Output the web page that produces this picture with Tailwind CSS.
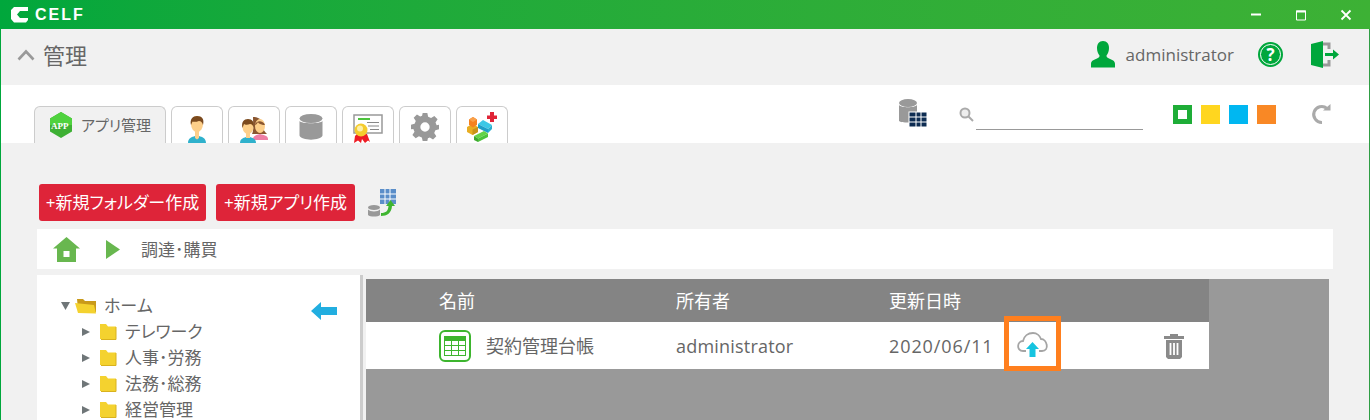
<!DOCTYPE html>
<html lang="ja">
<head>
  <meta charset="UTF-8" />
  <title>CELF</title>
  <script src="https://cdn.jsdelivr.net/npm/@tailwindcss/browser@4"></script>
</head>
<body class="h-[420px] w-[1370px] overflow-hidden bg-[#f1f1f1] font-['Open_Sans','Noto_Sans_CJK_JP',sans-serif] [font-feature-settings:'palt'] text-[#666]">
<div class="h-[420px] flex flex-col border-x border-x-[#00a73c] border-r-[#2f9e44]">

  <!-- Title bar -->
  <div class="h-[29px] shrink-0 -mx-px flex items-center bg-gradient-to-r from-[#00a73c] to-[#3db135] text-white">
    <svg class="ml-[11px]" width="17" height="16" viewBox="0 0 17 16"><path d="M3 0H17V4H9L6 7.500L9 11H17V13L15 15.500H3L0 12V3Z" fill="#fff"/></svg>
    <span class="ml-[7px] font-['Liberation_Sans'] text-[16px] leading-none tracking-[2px] font-bold">CELF</span>
    <div class="ml-auto flex items-center">
      <svg width="12" height="12" viewBox="0 0 12 12" class="mr-[33px]"><path d="M1 5.500H11" stroke="#fff" stroke-width="2"/></svg>
      <svg width="12" height="12" viewBox="0 0 12 12" class="mr-[33px]"><path d="M1.500 2H10.500V11H1.500Z" stroke="#fff" fill="none"/><path d="M1 2.500H11" stroke="#fff" stroke-width="2"/></svg>
      <svg width="12" height="12" viewBox="0 0 12 12" class="mr-[18px]"><path d="M1.500 1.500L10.500 10.500M10.500 1.500L1.500 10.500" stroke="#fff" stroke-width="1.800"/></svg>
    </div>
  </div>

  <!-- Header -->
  <div class="h-[56px] shrink-0 flex items-center pb-[5px]">
    <svg class="ml-[16px]" width="18" height="12" viewBox="0 0 18 12"><path d="M1.500 10.500L9 2.500L16.500 10.500" stroke="#999" stroke-width="2.600" fill="none"/></svg>
    <span class="ml-[8px] text-[22px] leading-none">管理</span>
    <div class="ml-auto flex items-center">
      <svg width="26" height="27" viewBox="0 0 26 27" class="mb-[1px]"><path d="M13 0C17 0 19 3 19 7C19 10 18 12.500 16.500 14.500C16.500 16 17 16.500 19 17.500C22 19 25 19.500 25 23V26.500H1V23C1 19.500 4 19 7 17.500C9 16.500 9.500 16 9.500 14.500C8 12.500 7 10 7 7C7 3 9 0 13 0Z" fill="#00a73c"/></svg>
      <span class="ml-[10px] text-[17px] leading-none">administrator</span>
      <div class="ml-[24px] w-[25px] h-[25px] rounded-full bg-[#00a73c] border-2 border-[#00a73c] outline outline-1 -outline-offset-3 outline-white flex items-center justify-center text-white text-[17px] font-bold leading-none">?</div>
      <svg class="ml-[27px] mr-[29px]" width="30" height="28" viewBox="0 0 30 28"><path d="M1 3L13 0V27L1 24Z" fill="#00a73c"/><path d="M13 3H19V8M19 19V24H13" stroke="#999" stroke-width="3" fill="none"/><path d="M15 12H23V8.500L29 13.500L23 18.500V15H15Z" fill="#00a73c"/></svg>
    </div>
  </div>

  <!-- Tabs -->
  <div class="h-[58px] shrink-0 bg-white flex items-end relative">
    <div class="ml-[33px] flex gap-[5px] items-end">
      <div class="w-[132px] h-[37px] border border-b-0 border-[#ccc] rounded-t-[6px] bg-[#f1f1f1] flex items-center pl-[14px] relative">
        <svg width="24" height="26" viewBox="0 0 24 26"><path d="M12 0L23 6.500V19.500L12 26L1 19.500V6.500Z" fill="#3eb034"/><path d="M12 0L23 6.500V13H1V6.500Z" fill="#4fd23e"/></svg>
        <span class="absolute left-[16px] top-[15px] text-[9px] font-bold text-white leading-none font-['Liberation_Serif']">APP</span>
        <span class="ml-[8px] text-[15px] leading-none">アプリ管理</span>
      </div>
      <div class="w-[52px] h-[37px] border border-b-0 border-[#ccc] rounded-t-[6px] flex items-end justify-center">
        <svg width="18" height="27" viewBox="0 0 18 27"><path d="M0 27C0 22 4 21 7 20H11C14 21 18 22 18 27Z" fill="#2fb1cc"/><path d="M7 14H11V22L9 23.500L7 22Z" fill="#fdcf8a"/><ellipse cx="9" cy="8" rx="6" ry="8" fill="#fdcf8a"/><path d="M3 9C1.500 3 5 0 9 0C14 0 16.500 3 15 9C14 6 13 5 11 5C9 6 5 6 4.500 5.500Z" fill="#7b4a1e"/></svg>
      </div>
      <div class="w-[52px] h-[37px] border border-b-0 border-[#ccc] rounded-t-[6px] flex items-end justify-center">
        <svg width="28" height="26" viewBox="0 0 28 26"><path d="M13 0C20 0 23 4 23 9C23 13 25 15 27 17H12C14 14 13 5 13 0Z" fill="#8a5630"/><path d="M13 22C13 19 16 18 20 17C24 18 28 19 28 22V23H13Z" fill="#ee7ea5"/><ellipse cx="20" cy="9" rx="5" ry="7" fill="#fdcf8a"/><path d="M15 8C16 3 23 3 25 8C21 8 18 6 18 5C17 7 16 8 15 8Z" fill="#8a5630"/><path d="M0 26C0 22 3 21 6 20H10C13 21 16 22 16 26Z" fill="#2fb1cc"/><rect x="6" y="14" width="4" height="7" fill="#fdcf8a"/><ellipse cx="8" cy="10" rx="5.500" ry="7" fill="#fdcf8a"/><path d="M2.500 11C1 5 4 2 8 2C12 2 15 5 13.500 11C13 8 12 7 10 7C8 8 5 8 4 7Z" fill="#7b4a1e"/></svg>
      </div>
      <div class="w-[52px] h-[37px] border border-b-0 border-[#ccc] rounded-t-[6px] flex items-start justify-center pt-[7px]">
        <svg width="24" height="26" viewBox="0 0 24 26"><ellipse cx="12" cy="4.500" rx="11.500" ry="4.500" fill="#999"/><path d="M.5 7C2 10 22 10 23.500 7V21.500C22 27 2 27 .5 21.500Z" fill="#999"/></svg>
      </div>
      <div class="w-[52px] h-[37px] border border-b-0 border-[#ccc] rounded-t-[6px] flex items-start justify-center pt-[7px]">
        <svg width="30" height="29" viewBox="0 0 30 29"><rect x="1" y="1" width="28" height="18" fill="#fff" stroke="#999" stroke-width="1.500"/><rect x="5" y="4" width="12" height="2" fill="#4cc33c"/><path d="M14 8.500H26M15 12H26M17 15.500H26" stroke="#888"/><path d="M2 22L1 29L5 26.500L8 29L9 25L12 29L15 26.500L17 28L14 20H4Z" fill="#ee1c25"/><circle cx="8" cy="16" r="6.500" fill="#f5cc2e"/><circle cx="7" cy="14.500" r="3" fill="#fcefa8"/></svg>
      </div>
      <div class="w-[52px] h-[37px] border border-b-0 border-[#ccc] rounded-t-[6px] flex items-start justify-center pt-[6px]">
        <svg width="28" height="28" viewBox="0 0 24 24"><path fill="#999" fill-rule="evenodd" d="M10 0H14L14.700 3.300L17.200 4.300L20 2.500L22.800 5.300L21 8.100L22 10.500L24 10V14L20.900 14.700L19.900 17.200L21.700 20L18.900 22.800L16.100 21L14.500 21.700L14 24H10L9.300 20.900L6.800 19.900L4 21.700L1.200 18.900L3 16.100L2 13.700L0 14V10L3.100 9.300L4.100 6.800L2.300 4L5.100 1.200L7.900 3L9.500 2.300ZM12 8A4 4 0 1 0 12 16A4 4 0 1 0 12 8Z"/></svg>
      </div>
      <div class="w-[52px] h-[37px] border border-b-0 border-[#ccc] rounded-t-[6px] flex items-start justify-center pt-[3px]">
        <svg width="32" height="33" viewBox="0 0 32 33">
          <path d="M24 2H28V5.500H31V9H28V12H24V9H21V5.500H24Z" fill="#e02437"/>
          <path d="M12 14L17 10L26 15L22 19Z" fill="#3cc8e6"/><path d="M12 14L22 19V23L12 18Z" fill="#1f9fc8"/><path d="M22 19L26 15V19L22 23Z" fill="#2ab0d0"/>
          <path d="M6.500 14L12 17V22L6.500 25L1 22V17Z" fill="#e8ad22"/><path d="M6.500 19.500L12 17V22L6.500 25Z" fill="#c9921a"/>
          <path d="M7 7L11 9.500V15L7 17.500L3 15V9.500Z" fill="#f58220"/><path d="M7 7L11 9.500L7 12L3 9.500Z" fill="#f9a04a"/>
          <path d="M8 26L18 21L22 23.500L12 28.500Z" fill="#63d348"/><path d="M8 26L12 28.500V32L8 30Z" fill="#3da82f"/><path d="M12 28.500L22 23.500V27L12 32Z" fill="#4cc33c"/>
        </svg>
      </div>
    </div>
    <div class="absolute right-0 top-0 h-[58px] flex items-center">
      <svg width="29" height="29" viewBox="0 0 29 29" class="mb-[1px]"><ellipse cx="10" cy="4" rx="9" ry="4" fill="#999"/><path d="M1 6C3 9 17 9 19 6V22C17 24 3 24 1 22Z" fill="#999"/><rect x="11" y="13" width="18" height="15" fill="#0d2c52" stroke="#fff"/><path d="M18 13V28M23 13V28M11 18H29M11 23H29" stroke="#fff"/></svg>
      <svg class="ml-[32px]" width="15" height="15" viewBox="0 0 15 15"><circle cx="6" cy="6" r="4.500" fill="#eee" stroke="#aaa" stroke-width="2"/><path d="M9.500 9.500L14 14" stroke="#aaa" stroke-width="2"/></svg>
      <div class="ml-[2px] mt-[19px] w-[167px] border-b border-[#999] h-[13px]"></div>
      <div class="ml-[30px] w-[19px] h-[19px] border-[5px] border-[#1ead37] bg-white"></div>
      <div class="ml-[9px] w-[19px] h-[19px] bg-[#ffd61f]"></div>
      <div class="ml-[9px] w-[19px] h-[19px] bg-[#00b7f1]"></div>
      <div class="ml-[9px] w-[19px] h-[19px] bg-[#f98825]"></div>
      <svg class="ml-[35px] mr-[37px]" width="21" height="21" viewBox="0 0 21 21"><path d="M16 4.500A8 8 0 1 0 11 18.500" stroke="#aaa" stroke-width="3" fill="none"/><path d="M12 6.500H19.500V0Z" fill="#aaa"/></svg>
    </div>
  </div>

  <!-- Main -->
  <div class="flex-1 min-h-0 pl-[36px] pr-[36px]">
    <div class="mt-[41px] ml-[2px] h-[37px] flex items-center">
      <button class="w-[167px] h-[37px] bg-[#de2439] rounded-[3px] text-white text-[17px] leading-none whitespace-nowrap">+新規フォルダー作成</button>
      <button class="ml-[10px] w-[139px] h-[37px] bg-[#de2439] rounded-[3px] text-white text-[17px] leading-none whitespace-nowrap">+新規アプリ作成</button>
      <svg class="ml-[13px]" width="28" height="29" viewBox="0 0 28 29"><rect x="12" y="1" width="16" height="15" fill="#5b8ec9"/><path d="M17 1V16M22 1V16M12 6H28M12 11H28" stroke="#fff"/><ellipse cx="6" cy="19.500" rx="6" ry="2.500" fill="#999"/><path d="M0 21.500C2 24 10 24 12 21.500V27C10 29 2 29 0 27Z" fill="#999"/><path d="M13 25C18 25 20 23 20.500 18H18L22.500 12L27 18H24C23.500 25 19 28 13 28Z" fill="#3fb531"/></svg>
    </div>

    <div class="mt-[8px] h-[40px] bg-white flex items-center">
      <svg class="ml-[16px]" width="27" height="25" viewBox="0 0 27 25"><path d="M13.500 0L27 11.500H23V25H4V11.500H0Z" fill="#68b74f"/><rect x="10.500" y="14" width="6" height="6" fill="#fff"/></svg>
      <svg class="ml-[26px]" width="15" height="19" viewBox="0 0 15 19"><path d="M0 0L14 9.500L0 19Z" fill="#68b74f"/></svg>
      <span class="ml-[20px] text-[17px] leading-none">調達･購買</span>
    </div>

    <div class="mt-[6px] flex h-[145px] items-start">
      <!-- Folder tree -->
      <div class="w-[326px] h-[145px] bg-white border-r-[3px] border-[#ccc] relative pt-[18px] pl-[24px] text-[17px] leading-[26px]">
        <svg class="absolute left-[274px] top-[27px]" width="26" height="18" viewBox="0 0 26 18"><path d="M0 9L10 0V5H26V13H10V18Z" fill="#22aee0"/></svg>
        <div class="flex items-center h-[26px]">
          <svg width="9" height="8" viewBox="0 0 9 8"><path d="M0 0H9L4.500 8Z" fill="#6f7678"/></svg>
          <svg class="ml-[5px]" width="22" height="16" viewBox="0 0 22 16"><path d="M2 1H8L10 3H21V14L19 15L3 11Z" fill="#c99a1a"/><path d="M0 5L19 7L21 15.500L3 15Z" fill="#f4d22f"/></svg>
          <span class="ml-[7px]">ホーム</span>
        </div>
        <div class="flex items-center h-[26px] pl-[21px]">
          <svg width="8" height="8" viewBox="0 0 8 8"><path d="M0 0L8 4L0 8Z" fill="#6f7678"/></svg>
          <svg class="ml-[9px]" width="18" height="16" viewBox="0 0 18 16"><path d="M1 0H7L9 2.500H17V15H1Z" fill="#f4d22f"/><path d="M17 3V15.500H2" stroke="#d9b21e" fill="none"/></svg>
          <span class="ml-[8px]">テレワーク</span>
        </div>
        <div class="flex items-center h-[26px] pl-[21px]">
          <svg width="8" height="8" viewBox="0 0 8 8"><path d="M0 0L8 4L0 8Z" fill="#6f7678"/></svg>
          <svg class="ml-[9px]" width="18" height="16" viewBox="0 0 18 16"><path d="M1 0H7L9 2.500H17V15H1Z" fill="#f4d22f"/><path d="M17 3V15.500H2" stroke="#d9b21e" fill="none"/></svg>
          <span class="ml-[8px]">人事･労務</span>
        </div>
        <div class="flex items-center h-[26px] pl-[21px]">
          <svg width="8" height="8" viewBox="0 0 8 8"><path d="M0 0L8 4L0 8Z" fill="#6f7678"/></svg>
          <svg class="ml-[9px]" width="18" height="16" viewBox="0 0 18 16"><path d="M1 0H7L9 2.500H17V15H1Z" fill="#f4d22f"/><path d="M17 3V15.500H2" stroke="#d9b21e" fill="none"/></svg>
          <span class="ml-[8px]">法務･総務</span>
        </div>
        <div class="flex items-center h-[26px] pl-[21px]">
          <svg width="8" height="8" viewBox="0 0 8 8"><path d="M0 0L8 4L0 8Z" fill="#6f7678"/></svg>
          <svg class="ml-[9px]" width="18" height="16" viewBox="0 0 18 16"><path d="M1 0H7L9 2.500H17V15H1Z" fill="#f4d22f"/><path d="M17 3V15.500H2" stroke="#d9b21e" fill="none"/></svg>
          <span class="ml-[8px]">経営管理</span>
        </div>
      </div>

      <!-- App list -->
      <div class="ml-[3px] mt-[4px] w-[963px] h-[141px] bg-[#999]">
        <div class="w-[843px]">
          <div class="h-[43px] bg-[#848484] flex items-center text-white text-[18px] leading-none">
            <span class="ml-[73px] w-[237px]">名前</span>
            <span class="w-[213px]">所有者</span>
            <span>更新日時</span>
          </div>
          <div class="h-[47px] bg-white flex items-center relative text-[18px] leading-none">
            <svg class="ml-[73px]" width="32" height="32" viewBox="0 0 32 32"><rect x="1" y="1" width="30" height="30" rx="5" fill="#fff" stroke="#3db52e" stroke-width="2"/><rect x="5" y="6" width="22" height="20" fill="#3db52e"/><path d="M6 11H26V25H6Z" fill="#fff"/><path d="M12.500 11V25M19.500 11V25M6 15.500H26M6 20.500H26" stroke="#3db52e"/></svg>
            <span class="ml-[15px] w-[190px]">契約管理台帳</span>
            <span class="w-[213px] tracking-[0.2px]">administrator</span>
            <span class="tracking-[0.9px]">2020/06/11</span>
            <div class="absolute left-[638px] -top-[6px] w-[57px] h-[55px] border-[5px] border-[#ff7f1e] flex items-center justify-center">
              <svg width="32" height="29" viewBox="0 0 32 29"><path d="M9 22H6C-1 22 0 12 6 12C7 7 11 4 16 4C20 4 23 7 24 10C30 10 33 22 25 22H22" stroke="#a5a5a5" stroke-width="1.800" fill="none"/><path d="M15.500 13L22 20H18.500V28H12.500V20H9Z" fill="#16c4e0"/></svg>
            </div>
            <svg class="absolute left-[797px] top-[11px]" width="22" height="26" viewBox="0 0 22 26"><path d="M7 3V1H15V3H21V6H1V3Z" fill="#8a8a8a"/><path d="M3 7H19V24L17 26H5L3 24Z" fill="#8a8a8a"/><path d="M7.500 10V22M11 10V22M14.500 10V22" stroke="#fff" stroke-width="1.800"/></svg>
          </div>
        </div>
      </div>
    </div>
  </div>
</div>
</body>
</html>
